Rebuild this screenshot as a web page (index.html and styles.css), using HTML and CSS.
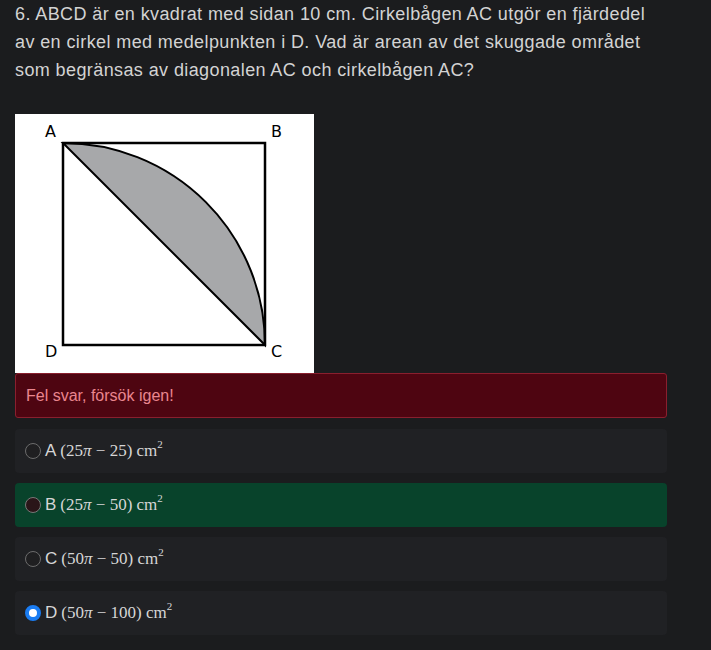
FILE: index.html
```html
<!DOCTYPE html>
<html lang="sv">
<head>
<meta charset="utf-8">
<link rel="stylesheet" href="styles.css">
</head>
<body>
<div class="page">
  <p class="question">6. ABCD är en kvadrat med sidan 10 cm. Cirkelbågen AC utgör en fjärdedel av en cirkel med medelpunkten i D. Vad är arean av det skuggade området som begränsas av diagonalen AC och cirkelbågen AC?</p>
  <div class="figure">
    <svg width="299" height="259" viewBox="0 0 299 259">
      <rect x="0" y="0" width="299" height="259" fill="#fff"/>
      <path d="M48 29 A202 202 0 0 1 250 231 Z" fill="#a7a8aa" stroke="#000" stroke-width="2"/>
      <rect x="48" y="29" width="202" height="202" fill="none" stroke="#000" stroke-width="2.5"/>
      <text x="30" y="23" class="lbl">A</text>
      <text x="256" y="23" class="lbl">B</text>
      <text x="30" y="243" class="lbl">D</text>
      <text x="256" y="243" class="lbl">C</text>
    </svg>
  </div>
  <div class="alert">Fel svar, försök igen!</div>
  <div class="options">
    <label class="opt"><span class="radio"></span><span class="letter">A</span> <span class="math">(25<i>π</i> − 25) cm<sup>2</sup></span></label>
    <label class="opt correct"><span class="radio dark"></span><span class="letter">B</span> <span class="math">(25<i>π</i> − 50) cm<sup>2</sup></span></label>
    <label class="opt"><span class="radio"></span><span class="letter">C</span> <span class="math">(50<i>π</i> − 50) cm<sup>2</sup></span></label>
    <label class="opt"><span class="radio checked"></span><span class="letter">D</span> <span class="math">(50<i>π</i> − 100) cm<sup>2</sup></span></label>
  </div>
</div>
</body>
</html>
```

FILE: styles.css
```css
html, body {
  margin: 0;
  padding: 0;
  background: #1b1c1e;
}
.page {
  padding: 0 44px 0 15px;
  font-family: "Liberation Sans", Arial, sans-serif;
  color: #d3d3d3;
}
.question {
  margin: 0;
  padding-top: 0;
  font-size: 18px;
  line-height: 28px;
  letter-spacing: 0.4px;
  width: 652px;
}
.figure {
  margin-top: 30px;
  height: 259px;
}
.figure svg {
  display: block;
}
.lbl {
  font-family: "DejaVu Sans", sans-serif;
  font-size: 16px;
  fill: #000;
}
.alert {
  box-sizing: border-box;
  height: 45px;
  background: #4e0511;
  border: 1px solid #8a1f2e;
  border-radius: 3px;
  color: #ea868f;
  font-size: 16px;
  padding: 0 10px;
  display: flex;
  align-items: center;
}
.options {
  display: flex;
  flex-direction: column;
  gap: 10px;
  margin-top: 11px;
}
.opt {
  box-sizing: border-box;
  height: 44px;
  background: #202124;
  border-radius: 4px;
  display: flex;
  align-items: center;
  padding-left: 10px;
  font-size: 17px;
  color: #d6d6d6;
}
.opt.correct {
  background: #08432b;
}
.radio {
  box-sizing: border-box;
  width: 16px;
  height: 16px;
  border-radius: 50%;
  border: 1px solid #6c6c6c;
  background: #1f1f21;
  margin-right: 4px;
  flex: none;
}
.radio.dark {
  background: #2a1518;
  border-color: #777;
}
.radio.checked {
  background: #fff;
  border: 4.5px solid #1a7cf2;
}
.letter {
  margin-right: 4px;
}
.math {
  font-family: "Liberation Serif", "DejaVu Serif", serif;
  font-size: 17px;
}
.math i {
  font-style: italic;
}
.math sup {
  font-size: 11px;
  vertical-align: 8px;
  line-height: 0;
}
```
